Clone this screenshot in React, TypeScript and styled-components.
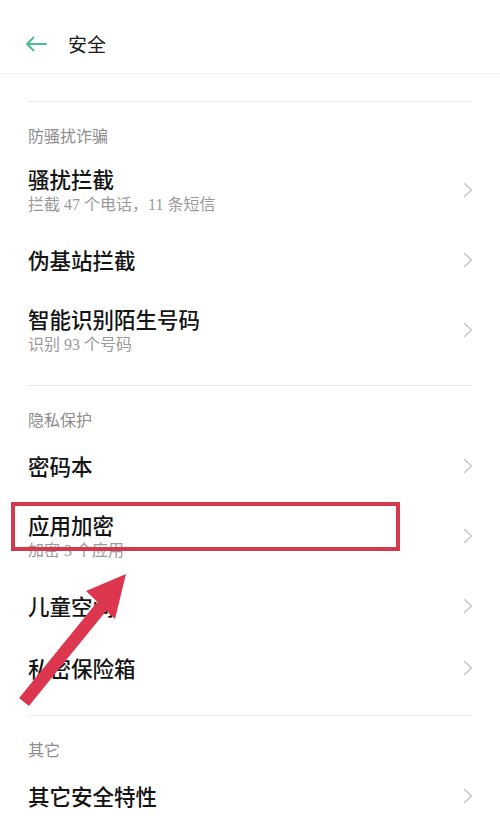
import React from "react";
import styled, { createGlobalStyle } from "styled-components";

const GlobalStyle = createGlobalStyle`
  html, body {
    margin: 0;
    padding: 0;
    background: #ffffff;
  }
  body {
    font-family: "Noto Sans CJK SC", "Noto Sans", sans-serif;
    -webkit-font-smoothing: antialiased;
  }
`;

interface IRow {
  title: string;
  sub?: string;
}

interface ISection {
  name: string;
  rows: IRow[];
}

const sections: ISection[] = [
  {
    name: "防骚扰诈骗",
    rows: [
      { title: "骚扰拦截", sub: "拦截 47 个电话，11 条短信" },
      { title: "伪基站拦截" },
      { title: "智能识别陌生号码", sub: "识别 93 个号码" },
    ],
  },
  {
    name: "隐私保护",
    rows: [
      { title: "密码本" },
      { title: "应用加密", sub: "加密 3 个应用" },
      { title: "儿童空间" },
      { title: "私密保险箱" },
    ],
  },
  {
    name: "其它",
    rows: [{ title: "其它安全特性" }],
  },
];

const App: React.FC = () => {
  return (
    <PageS>
      <GlobalStyle />
      <HeaderS>
        <BackS aria-label="back">
          <svg width="22" height="16" viewBox="0 0 22 16" fill="none">
            <path
              d="M21 8H2M8.5 1.5L2 8l6.5 6.5"
              stroke="#4dbf8c"
              strokeWidth="2"
              strokeLinecap="round"
              strokeLinejoin="round"
            />
          </svg>
        </BackS>
        <HeaderTitleS>安全</HeaderTitleS>
      </HeaderS>
      <TopGapS />
      {sections.map((section, i) => (
        <SectionS key={section.name}>
          <DividerS />
          <SectionTitleS>{section.name}</SectionTitleS>
          {section.rows.map((row) => (
            <RowS key={row.title} tall={!!row.sub}>
              <TextsS>
                <RowTitleS>{row.title}</RowTitleS>
                {row.sub && <RowSubS>{row.sub}</RowSubS>}
              </TextsS>
              <Chevron />
            </RowS>
          ))}
          {i < sections.length - 1 && <BottomGapS />}
        </SectionS>
      ))}
      {/* annotation overlay */}
      <HighlightS />
      <ArrowS width="140" height="150" viewBox="0 0 140 150">
        <line
          x1="24"
          y1="136"
          x2="102"
          y2="40"
          stroke="#dd3750"
          strokeWidth="12.5"
        />
        <polygon points="126,8 86,25 115,53" fill="#dd3750" />
      </ArrowS>
    </PageS>
  );
};

const Chevron: React.FC = () => (
  <ChevronS width="10" height="16" viewBox="0 0 10 16" fill="none">
    <path
      d="M1.5 1.5L8.5 8l-7 6.5"
      stroke="#c6c6c6"
      strokeWidth="1.4"
      strokeLinecap="round"
      strokeLinejoin="round"
    />
  </ChevronS>
);

export default App;

const PageS = styled.div`
  position: relative;
  width: 500px;
  height: 840px;
  overflow: hidden;
  background: #ffffff;
`;

const HeaderS = styled.div`
  display: flex;
  align-items: center;
  box-sizing: border-box;
  height: 74px;
  padding: 14px 0 0 25px;
  border-bottom: 1px solid #f1f1f1;
`;

const BackS = styled.div`
  display: flex;
  align-items: center;
  width: 43px;
`;

const HeaderTitleS = styled.div`
  font-size: 19px;
  color: #1a1a1a;
  line-height: 28px;
`;

const TopGapS = styled.div`
  height: 27px;
`;

const SectionS = styled.div`
  display: flex;
  flex-direction: column;
`;

const DividerS = styled.div`
  height: 1px;
  margin: 0 28px;
  background: #ececec;
`;

const SectionTitleS = styled.div`
  padding: 23px 28px 6px;
  font-size: 16px;
  line-height: 20px;
  color: #8c8c8c;
`;

const BottomGapS = styled.div`
  height: 16px;
`;

const RowS = styled.div<{ tall: boolean }>`
  display: flex;
  align-items: center;
  justify-content: space-between;
  box-sizing: border-box;
  height: ${(p) => (p.tall ? "78px" : "62px")};
  padding: 0 27px 0 28px;
`;

const TextsS = styled.div`
  display: flex;
  flex-direction: column;
  gap: 2px;
`;

const RowTitleS = styled.div`
  font-size: 21.5px;
  line-height: 28px;
  font-weight: 500;
  color: #141414;
`;

const RowSubS = styled.div`
  font-family: "Liberation Serif", "Noto Sans CJK SC", serif;
  font-size: 16px;
  line-height: 20px;
  color: #9a9a9a;
`;

const ChevronS = styled.svg`
  flex-shrink: 0;
`;

const HighlightS = styled.div`
  position: absolute;
  left: 11px;
  top: 502px;
  width: 389px;
  height: 49px;
  box-sizing: border-box;
  border: 4px solid #d4394d;
`;

const ArrowS = styled.svg`
  position: absolute;
  left: 0;
  top: 566px;
  overflow: visible;
`;
